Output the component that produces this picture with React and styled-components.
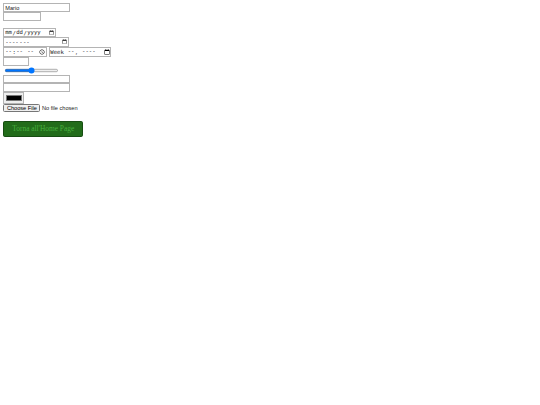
import React from "react";
import styled, { createGlobalStyle } from "styled-components";

const Global = createGlobalStyle`
  html { zoom: 0.421875; overflow: hidden; }
  body { margin: 8px; font-family: "Liberation Serif", serif; background: #fff; }
`;

const Form = styled.form`
  display: block;
`;

const Field = styled.input`
  ${(p) => (p.$w ? `width: ${p.$w}px; box-sizing: border-box;` : "")}
  ${(p) => (p.$plain ? "" : "border: 2px solid #b4b4b4;")}
  color: #222;
`;

const HomeButton = styled.button`
  display: inline-block;
  margin-top: 20px;
  width: 189px;
  height: 38px;
  padding: 0;
  background: #226c1a;
  border: 1px solid #174d12;
  border-radius: 4px;
  color: #48b03e;
  font-family: "Liberation Serif", serif;
  font-size: 17.5px;
  cursor: pointer;
`;

export default function App() {
  return (
    <>
      <Global />
      <Form onSubmit={(e) => e.preventDefault()}>
        <Field type="text" defaultValue="Mario" $w={159} />
        <br />
        <Field type="number" $w={88} />
        <br />
        <br />
        <Field type="date" $w={125} />
        <br />
        <Field type="month" $w={156} />
        <br />
        <Field type="time" $w={104} /> <Field type="week" $w={148} />
        <br />
        <Field type="number" $w={60} />
        <br />
        <Field type="range" $w={130} $plain />
        <br />
        <Field type="email" $w={159} />
        <br />
        <Field type="password" $w={159} />
        <br />
        <Field type="color" defaultValue="#000000" />
        <br />
        <Field type="file" $plain />
        <br />
        <HomeButton type="button">Torna all'Home Page</HomeButton>
      </Form>
    </>
  );
}
